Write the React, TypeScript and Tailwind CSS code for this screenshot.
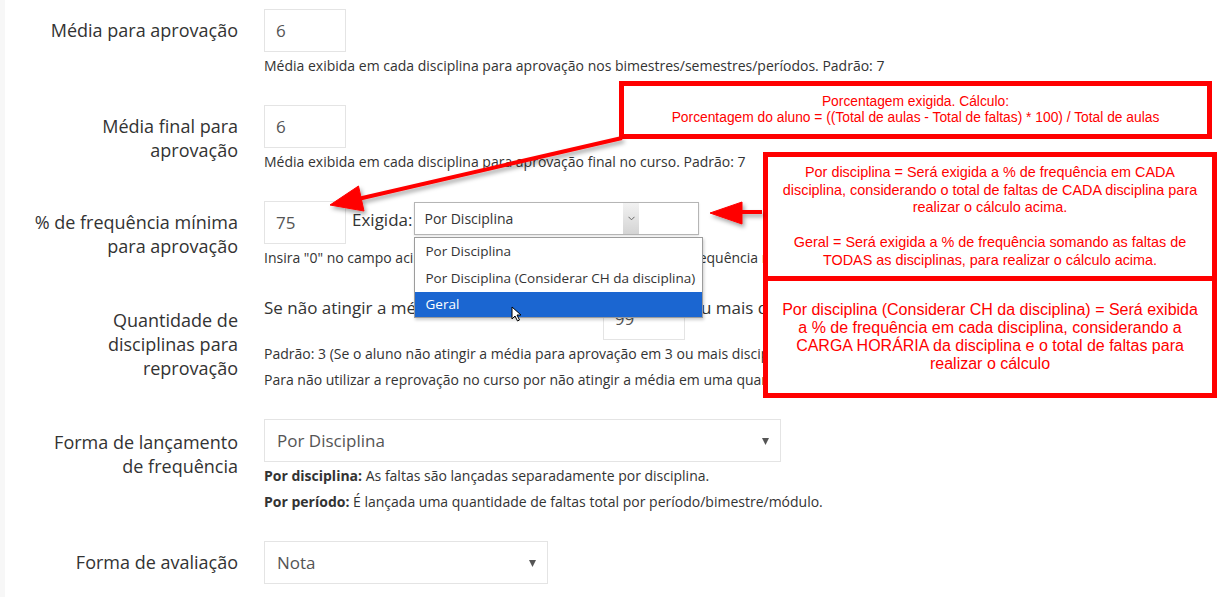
import React from 'react';

const Label = ({ children, pt = 'pt-[9px]' }: { children: React.ReactNode; pt?: string }) => (
  <div className={`text-right text-[18px] leading-[24px] text-[#333] ${pt}`}>{children}</div>
);

const TextBox = ({ value, className = '' }: { value: string; className?: string }) => (
  <input
    readOnly
    value={value}
    className={`w-[82px] h-[43px] shrink-0 border border-[#e4e4e4] bg-white px-[11px] text-[17px] text-[#555] outline-none ${className}`}
  />
);

const Help = ({ children, className = '' }: { children: React.ReactNode; className?: string }) => (
  <p className={`mt-[4px] whitespace-nowrap text-[14px] leading-[20px] text-[#333] ${className}`}>{children}</p>
);

const FlatSelect = ({ value, width }: { value: string; width: string }) => (
  <div className={`flex h-[43px] items-center justify-between border border-[#e4e4e4] bg-white pl-[12px] pr-[11px] text-[17px] text-[#555] ${width}`}>
    <span>{value}</span>
    <svg width="7" height="8" viewBox="0 0 7 8">
      <path d="M0 1 L7 1 L3.5 8 Z" fill="#555" />
    </svg>
  </div>
);

const Row = ({ label, children }: { label: React.ReactNode; children: React.ReactNode }) => (
  <div className="grid grid-cols-[233px_1fr] gap-x-[26px]">
    {label}
    <div>{children}</div>
  </div>
);

export default function App() {
  return (
    <div className="relative h-[597px] w-[1229px] overflow-hidden border-l-[5px] border-[#f7f7f7] bg-white font-['Open_Sans',sans-serif] text-[#333]">
      {/* form */}
      <div className="flex flex-col gap-[29px] pt-[9px]">
        <Row label={<Label>Média para aprovação</Label>}>
          <TextBox value="6" />
          <Help>Média exibida em cada disciplina para aprovação nos bimestres/semestres/períodos. Padrão: 7</Help>
        </Row>

        <Row label={<Label>Média final para<br />aprovação</Label>}>
          <TextBox value="6" />
          <Help>Média exibida em cada disciplina para aprovação final no curso. Padrão: 7</Help>
        </Row>

        <Row label={<Label>% de frequência mínima<br />para aprovação</Label>}>
          <div className="flex items-start">
            <TextBox value="75" />
            <span className="ml-[6px] mt-[7px] text-[17px] leading-[24px]">Exigida:</span>
            <div className="relative ml-[2px] mt-[1px] flex h-[33px] w-[285px] border border-[#b5b5b5] bg-white shadow-[0_1px_2px_rgba(0,0,0,0.12)]">
              <span className="w-[208px] pl-[9px] text-[14px] leading-[31px] text-[#333]">Por Disciplina</span>
              <span className="flex w-[16px] items-center justify-center bg-gradient-to-b from-[#f2f2f2] to-[#d4d4d4]">
                <svg width="7" height="5" viewBox="0 0 7 5">
                  <path d="M0.5 0.8 L3.5 3.8 L6.5 0.8" stroke="#666" strokeWidth="1" fill="none" />
                </svg>
              </span>
              {/* open list */}
              <div className="absolute left-[-1px] top-[34px] z-10 w-[289px] whitespace-nowrap border border-[#9c9c9c] bg-white text-[13.5px] text-[#333] shadow-[1px_2px_3px_rgba(0,0,0,0.2)]">
                <div className="h-[27px] pl-[10px] leading-[27px]">Por Disciplina</div>
                <div className="h-[27px] pl-[10px] leading-[27px]">Por Disciplina (Considerar CH da disciplina)</div>
                <div className="h-[25px] bg-[#1b66d1] pl-[10px] leading-[25px] text-white">Geral</div>
              </div>
            </div>
          </div>
          <Help>Insira "0" no campo acima para não considerar a reprovação por frequência no curso.</Help>
        </Row>

        <Row label={<Label pt="pt-[11px]">Quantidade de<br />disciplinas para<br />reprovação</Label>}>
          <div className="flex items-start whitespace-nowrap text-[17px] leading-[22px]">
            <span>Se não atingir a média para aprovação em</span>
            <TextBox value="99" className="ml-[5px]" />
            <span className="ml-[6px]">ou mais disciplinas, o aluno será reprovado no curso.</span>
          </div>
          <Help>Padrão: 3 (Se o aluno não atingir a média para aprovação em 3 ou mais disciplinas, será reprovado no curso)</Help>
          <Help className="mt-[6px]">Para não utilizar a reprovação no curso por não atingir a média em uma quantidade de disciplinas, insira 99.</Help>
        </Row>

        <Row label={<Label pt="pt-[11px]">Forma de lançamento<br />de frequência</Label>}>
          <FlatSelect value="Por Disciplina" width="w-[517px]" />
          <Help>
            <b className="font-bold">Por disciplina:</b> As faltas são lançadas separadamente por disciplina.
          </Help>
          <Help className="mt-[6px]">
            <b className="font-bold">Por período:</b> É lançada uma quantidade de faltas total por período/bimestre/módulo.
          </Help>
        </Row>

        <Row label={<Label>Forma de avaliação</Label>}>
          <FlatSelect value="Nota" width="w-[284px]" />
        </Row>
      </div>

      {/* annotations */}
      <div className="absolute left-[614px] top-[81px] flex h-[58px] w-[593px] flex-col items-center justify-center whitespace-nowrap border-[5px] border-[#ff0000] bg-white text-center font-['Liberation_Sans',Arial,sans-serif] text-[13.8px] leading-[16px] text-[#ff0000]">
        <p>Porcentagem exigida. Cálculo:</p>
        <p>Porcentagem do aluno = ((Total de aulas - Total de faltas) * 100) / Total de aulas</p>
      </div>

      <div className="absolute left-[758px] top-[152px] flex h-[129px] w-[454px] flex-col items-center justify-center whitespace-nowrap border-[5px] border-[#ff0000] bg-white text-center font-['Liberation_Sans',Arial,sans-serif] text-[14.4px] leading-[17.5px] text-[#ff0000]">
        <p>Por disciplina = Será exigida a % de frequência em CADA</p>
        <p>disciplina, considerando o total de faltas de CADA disciplina para</p>
        <p>realizar o cálculo acima.</p>
        <p>&nbsp;</p>
        <p>Geral = Será exigida a % de frequência somando as faltas de</p>
        <p>TODAS as disciplinas, para realizar o cálculo acima.</p>
      </div>

      <div className="absolute left-[758px] top-[276px] flex h-[122px] w-[454px] flex-col items-center justify-center whitespace-nowrap border-[5px] border-[#ff0000] bg-white text-center font-['Liberation_Sans',Arial,sans-serif] text-[16px] leading-[18px] text-[#ff0000]">
        <p>Por disciplina (Considerar CH da disciplina) = Será exibida</p>
        <p>a % de frequência em cada disciplina, considerando a</p>
        <p>CARGA HORÁRIA da disciplina e o total de faltas para</p>
        <p>realizar o cálculo</p>
      </div>

      {/* arrows + cursor */}
      <svg className="pointer-events-none absolute left-[-5px] top-0 z-20" width="1229" height="597" viewBox="0 0 1229 597">
        <defs>
          <filter id="sh" x="-10%" y="-10%" width="120%" height="140%">
            <feDropShadow dx="2" dy="3" stdDeviation="2" floodColor="#000" floodOpacity="0.35" />
          </filter>
        </defs>
        <g filter="url(#sh)" fill="#ff0000" stroke="#ff0000">
          <line x1="622" y1="138" x2="358" y2="199" strokeWidth="4" />
          <polygon points="330,205 364,211 358.5,186" strokeWidth="1" />
          <line x1="762" y1="212" x2="738" y2="212" strokeWidth="4" />
          <polygon points="710,213 742,202 742,224" strokeWidth="1" />
        </g>
        <path d="M512 307 L512 319 L515 316 L517.5 321 L519.5 320 L517 315 L521 315 Z" fill="#fff" stroke="#000" strokeWidth="1" />
      </svg>
    </div>
  );
}
